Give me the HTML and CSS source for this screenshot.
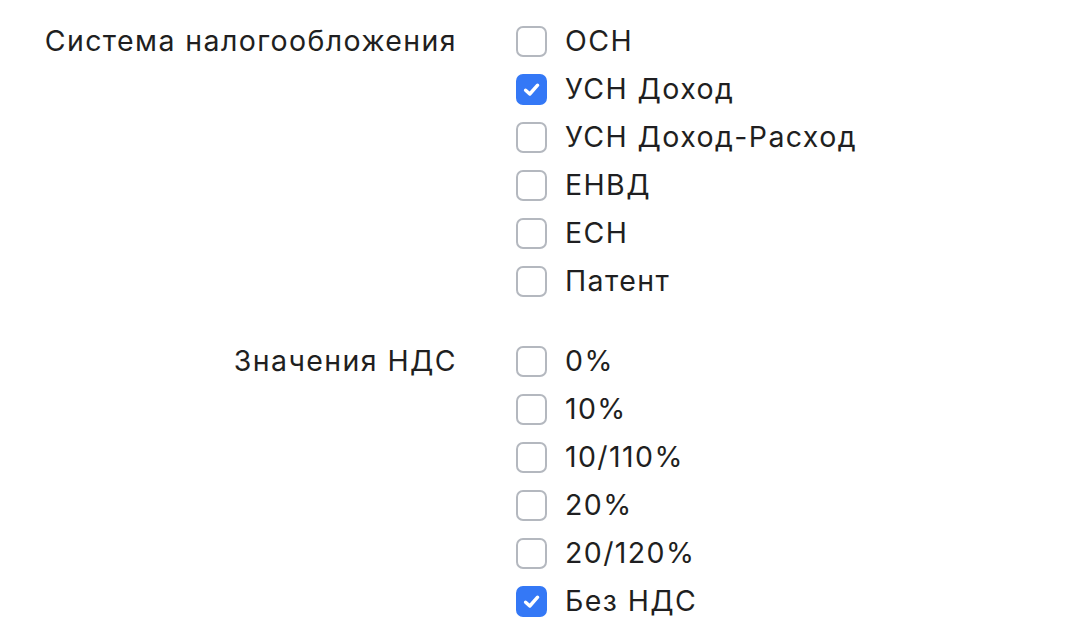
FILE: index.html
```html
<!DOCTYPE html>
<html lang="ru">
<head>
<meta charset="utf-8">
<link rel="stylesheet" href="styles.css">
</head>
<body>
<div class="form">
  <div class="group">
    <div class="label">Система налогообложения</div>
    <div class="options">
      <label class="opt"><span class="box"></span><span class="text">ОСН</span></label>
      <label class="opt"><span class="box checked"><svg viewBox="0 0 27 27"><path d="M7.6 14.2 L11.8 18 L19.6 9.2"/></svg></span><span class="text">УСН Доход</span></label>
      <label class="opt"><span class="box"></span><span class="text">УСН Доход-Расход</span></label>
      <label class="opt"><span class="box"></span><span class="text">ЕНВД</span></label>
      <label class="opt"><span class="box"></span><span class="text">ЕСН</span></label>
      <label class="opt"><span class="box"></span><span class="text">Патент</span></label>
    </div>
  </div>
  <div class="group">
    <div class="label">Значения НДС</div>
    <div class="options">
      <label class="opt"><span class="box"></span><span class="text">0%</span></label>
      <label class="opt"><span class="box"></span><span class="text">10%</span></label>
      <label class="opt"><span class="box"></span><span class="text">10/110%</span></label>
      <label class="opt"><span class="box"></span><span class="text">20%</span></label>
      <label class="opt"><span class="box"></span><span class="text">20/120%</span></label>
      <label class="opt"><span class="box checked"><svg viewBox="0 0 27 27"><path d="M7.6 14.2 L11.8 18 L19.6 9.2"/></svg></span><span class="text">Без НДС</span></label>
    </div>
  </div>
</div>
</body>
</html>
```
FILE: styles.css
```css
html, body {
  margin: 0;
  padding: 0;
  background: #ffffff;
}
body {
  font-family: Inter, "Noto Sans", sans-serif;
  font-size: 28.5px;
  letter-spacing: 1.4px;
  color: #1f1f21;
  width: 1090px;
  height: 638px;
  overflow: hidden;
}
.form {
  padding-top: 17px;
  display: flex;
  flex-direction: column;
  gap: 32px;
}
.group {
  display: grid;
  grid-template-columns: 457px auto;
  column-gap: 59px;
  align-items: start;
}
.label {
  text-align: right;
  height: 48px;
  line-height: 48px;
  white-space: nowrap;
}
.options {
  display: flex;
  flex-direction: column;
}
.opt {
  display: flex;
  align-items: center;
  height: 48px;
  gap: 18px;
}
.box {
  width: 31px;
  height: 31px;
  box-sizing: border-box;
  border: 2px solid #b4b8bf;
  border-radius: 7px;
  background: #fff;
  display: flex;
  align-items: center;
  justify-content: center;
  flex: none;
}
.box.checked {
  background: #3478f6;
  border-color: #3478f6;
}
.box svg {
  width: 27px;
  height: 27px;
}
.box svg path {
  fill: none;
  stroke: #fff;
  stroke-width: 3.4;
  stroke-linecap: round;
  stroke-linejoin: round;
}
.text {
  line-height: 48px;
  white-space: nowrap;
}
```
